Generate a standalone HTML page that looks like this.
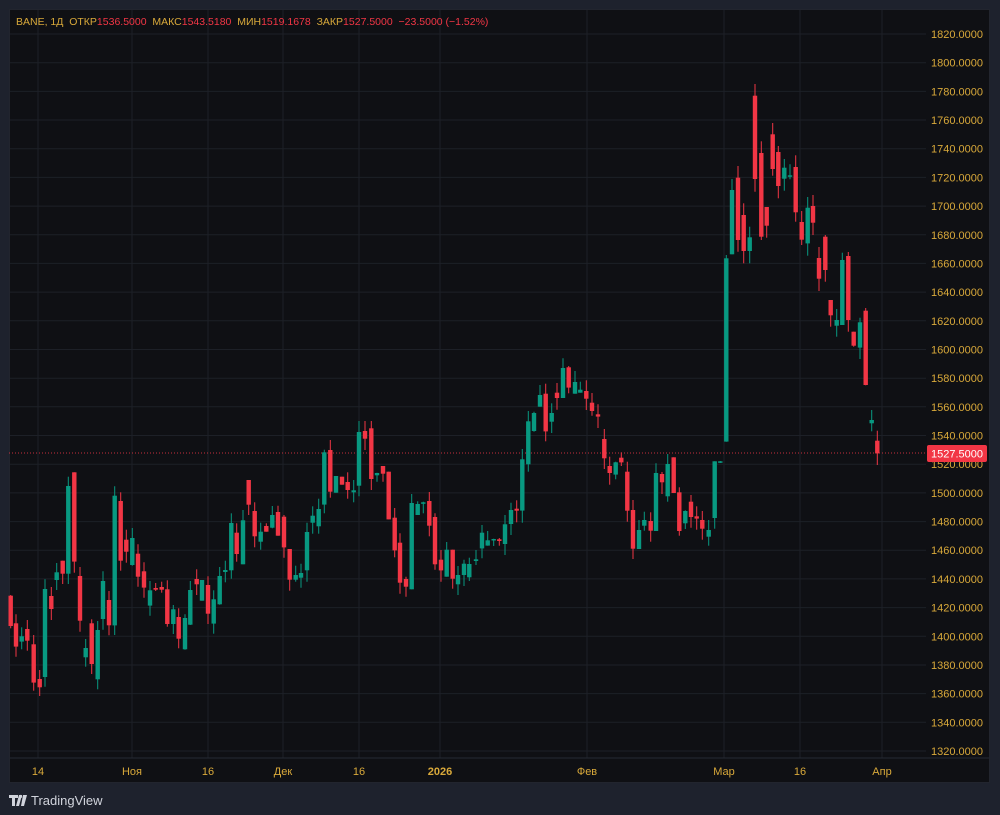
<!DOCTYPE html>
<html><head><meta charset="utf-8">
<style>
html,body{margin:0;padding:0;background:#1e222d;width:1000px;height:815px;overflow:hidden;font-family:"Liberation Sans",sans-serif}
#p{position:absolute;left:9px;top:9px;width:981px;height:774px;background:#0f1014}
svg{position:absolute;left:0;top:0}
.lg{position:absolute;left:16px;top:16px;font-size:10.5px;color:#d9a93a;white-space:pre}
.lg b{font-weight:normal;color:#f23645}
.tv{position:absolute;left:31px;top:793px;font-size:13px;color:#d1d4dc}
</style></head><body>
<div id="p"></div>
<svg id="s" width="1000" height="815" xmlns="http://www.w3.org/2000/svg"></svg>
<div class="lg">BANE, 1Д  ОТКР<b>1536.5000</b>  МАКС<b>1543.5180</b>  МИН<b>1519.1678</b>  ЗАКР<b>1527.5000</b>  <b>−23.5000 (−1.52%)</b></div>
<svg width="1000" height="815" style="pointer-events:none"><path d="M9 795h9v3h-3v8h-3v-8h-3z M19 795h3l-3 11h-3z M23 795h4l-3 11h-3z" fill="#d1d4dc"/><circle cx="20.5" cy="796.5" r="1.6" fill="#d1d4dc"/></svg>
<div class="tv">TradingView</div>
<script>
var s=document.getElementById('s'),h='';
function el(t){h+=t;}
for(var k=0;k<26;k++){var y=34+k*28.68;if(y>756)break;el('<line x1="9" x2="926" y1="'+y.toFixed(1)+'" y2="'+y.toFixed(1)+'" stroke="#1d2027"/>');
var p=(1820-20*k).toFixed(4);el('<text x="983" y="'+(y+4).toFixed(1)+'" fill="#d9a93a" font-size="11" text-anchor="end" font-family="Liberation Sans">'+p+'</text>');}
var tl=[[38,'14'],[132,'Ноя'],[208,'16'],[283,'Дек'],[359,'16'],[440,'2026'],[587,'Фев'],[724,'Мар'],[800,'16'],[882,'Апр']];
tl.forEach(function(t){el('<line x1="'+t[0]+'" x2="'+t[0]+'" y1="9" y2="758" stroke="#1d2027"/>');
el('<text x="'+t[0]+'" y="775" fill="#d9a93a" font-size="11" text-anchor="middle" font-family="Liberation Sans"'+(t[1]=='2026'?' font-weight="bold"':'')+'>'+t[1]+'</text>');});
el('<line x1="9" x2="990" y1="758" y2="758" stroke="#262a33"/>');
el('<rect x="9.5" y="9.5" width="980" height="773" fill="none" stroke="#22252e"/>');
el('<line x1="9" x2="926" y1="453" y2="453" stroke="#f23645" stroke-dasharray="1,2" opacity="0.8"/>');
var segs=[
[5,465,[[17,'R',390,490,392,483],[33,'R',448,575,475,545],[50,'G',487,553,514,530],[67,'R',465,557,492,527],[86,'R',510,677,538,653],[104,'R',615,693,642,667],[120,'G',343,665,372,636],[139,'R',366,465,393,432],[155,'G',294,375,322,345],[173,'R',287,357,287,326],[190,'G',35,357,63,326],[208,'R',22,323,22,290],[225,'R',306,500,333,467],[242,'G',522,605,549,577],[260,'R',463,627,475,597],[278,'G',468,673,495,643],[294,'G',319,494,348,462],[312,'R',378,511,405,481],[329,'G',64,510,92,481],[347,'R',82,317,108,287],[364,'R',194,293,224,260],[382,'G',189,302,219,300],[399,'R',238,365,266,335],[417,'R',292,398,319,368],[435,'G',348,452,376,422],[452,'R',354,378,369,374],[470,'R',350,383,366,374],[487,'R',346,485,373,477],[505,'G',420,507,433,477],[521,'R',430,550,456,521],[540,'G',448,554,459,553],[556,'G',348,480,375,479],[575,'R',313,390,342,358],[591,'G',345,407,345,407],[609,'R',334,477,360,446],[626,'G',376,506,403,476],[644,'G',306,419,333,418],[661,'G',287,352,315,321],[679,'G',145,341,174,316]]],
[230,415,[[20,'R',325,440,353,417],[39,'G',285,448,316,448],[56,'R',195,300,195,269],[74,'R',262,397,288,364],[92,'G',323,404,350,380],[109,'R',325,350,333,350],[127,'G',273,340,300,338],[144,'R',272,362,291,362],[162,'R',300,428,305,397],[179,'R',402,527,402,494],[197,'G',452,500,480,494],[213,'G',446,518,474,488],[231,'G',323,500,351,466],[248,'G',274,356,302,323],[266,'G',251,356,282,334],[283,'G',104,295,112,269],[301,'R',75,248,105,230],[318,'G',183,233,183,233],[336,'R',185,209,185,209],[353,'R',172,251,201,225],[371,'G',195,262,226,232],[387,'G',18,244,51,212],[405,'R',18,105,48,71],[424,'R',18,225,40,192],[441,'G',173,200,174,181],[459,'R',153,200,153,176],[476,'R',170,313,170,313],[494,'R',279,427,308,406],[510,'R',355,536,383,503],[528,'R',485,545,492,515],[545,'G',237,523,264,523],[563,'G',259,300,267,300],[580,'G',260,295,262,265],[598,'R',231,364,258,332],[615,'R',295,464,306,448],[633,'R',405,500,434,466],[650,'G',381,485,404,485],[668,'R',404,521,404,491],[684,'G',453,540,480,508],[702,'G',434,513,446,480],[718,'G',428,498,447,487]]],
[465,355,[[33,'G',585,630,613,618],[51,'G',510,610,533,580],[68,'G',528,572,556,572],[86,'G',551,573,552,556],[103,'R',549,572,553,558],[120,'G',480,600,508,567],[138,'G',443,540,465,507],[155,'R',436,502,461,467],[172,'G',282,503,313,467],[190,'G',168,350,199,328],[207,'G',170,230,174,228],[225,'G',90,155,120,155],[242,'R',86,259,116,229],[260,'G',145,234,174,200],[276,'R',84,164,113,129],[294,'G',10,129,39,129],[311,'R',33,115,37,98],[330,'G',48,116,81,116],[346,'G',80,113,104,113],[364,'R',76,165,108,131],[381,'R',114,182,143,168],[399,'R',148,219,178,185],[418,'R',222,342,252,310],[434,'R',305,389,333,354],[452,'G',320,373,322,359],[469,'R',292,333,308,322],[487,'R',320,500,350,467],[504,'R',435,612,465,581],[522,'G',495,582,525,582],[538,'G',470,527,495,512],[557,'R',472,560,498,527],[573,'G',325,528,354,528],[591,'R',351,417,357,382],[608,'G',297,440,327,424],[626,'R',307,414,307,414],[643,'R',397,542,412,528],[661,'G',466,522,468,505],[678,'R',420,518,440,486],[695,'R',454,524,484,491],[712,'R',468,554,495,521],[731,'G',495,572,525,545],[749,'G',319,521,319,489],[766,'G',318,324,319,323]]],
[715,80,[[34,'G',525,1085,535,1085],[51,'G',297,523,330,523],[69,'R',258,515,293,480],[86,'R',370,550,405,513],[104,'G',440,550,472,513],[120,'R',12,335,47,297],[139,'R',184,480,219,470],[155,'R',381,473,381,437],[173,'R',129,287,163,267],[190,'R',198,355,216,318],[208,'G',237,332,263,296],[225,'G',253,298,286,290],[242,'R',226,425,261,397],[260,'R',393,495,426,479],[278,'G',351,527,383,490],[294,'R',345,465,378,428],[312,'R',501,633,534,596],[331,'R',465,605,470,570],[347,'R',660,740,660,706],[365,'G',687,770,720,737],[382,'G',518,735,540,735],[400,'R',516,755,528,720],[416,'R',755,800,755,797],[435,'G',713,837,727,803],[452,'R',684,916,692,915],[470,'G',990,1054,1020,1030],[487,'R',1052,1155,1082,1120]]]];
segs.forEach(function(sg){var ox=sg[0],oy=sg[1];sg[2].forEach(function(c){
var x=ox+c[0]/3,col=c[1]=='G'?'#089981':'#f23645';
var wt=oy+c[2]/3,wb=oy+c[3]/3,bt=oy+c[4]/3,bb=oy+c[5]/3;if(bb-bt<1.5)bb=bt+1.5;
el('<line x1="'+x.toFixed(1)+'" x2="'+x.toFixed(1)+'" y1="'+wt.toFixed(1)+'" y2="'+wb.toFixed(1)+'" stroke="'+col+'" stroke-width="1"/>');
el('<rect x="'+(x-2.2).toFixed(1)+'" y="'+bt.toFixed(1)+'" width="4.4" height="'+(bb-bt).toFixed(1)+'" fill="'+col+'"/>');});});
el('<rect x="927" y="445" width="60" height="17" rx="2" fill="#f23645"/>');
el('<text x="957" y="457.5" fill="#fff" font-size="11" text-anchor="middle" font-family="Liberation Sans">1527.5000</text>');
s.innerHTML=h;
</script>
</body></html>
